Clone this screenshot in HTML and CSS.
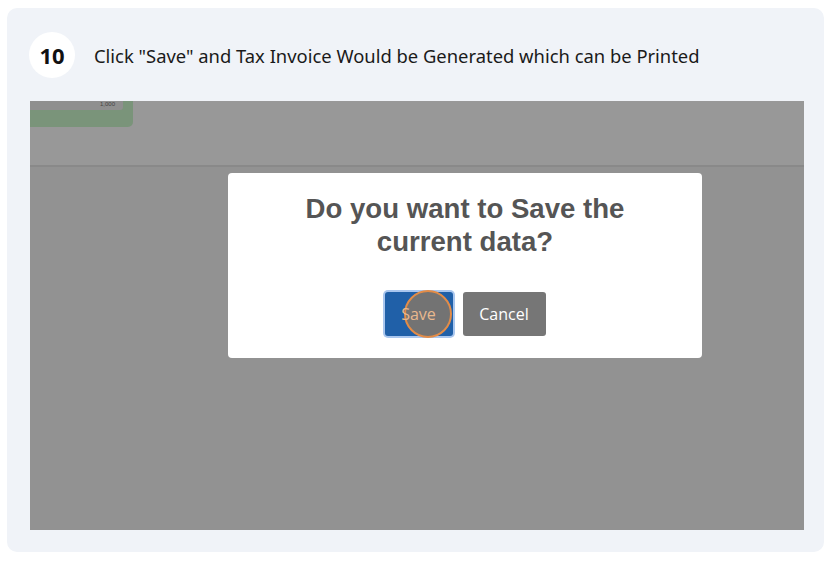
FILE: index.html
```html
<!DOCTYPE html>
<html>
<head>
<meta charset="utf-8">
<link rel="stylesheet" href="styles.css">
</head>
<body>
<div class="card">
  <div class="step">
    <div class="num">10</div>
    <div class="title">Click "Save" and Tax Invoice Would be Generated which can be Printed</div>
  </div>
  <div class="shot">
    <div class="top">
      <div class="greenbox"><div class="inner"><span class="cut">1,000</span></div></div>
    </div>
    <div class="bottom">
      <div class="dialog">
        <div class="q">Do you want to Save the<br>current data?</div>
        <div class="btns">
          <div class="btn save"><span class="ring"></span><span class="lbl">Save</span></div>
          <div class="btn cancel">Cancel</div>
        </div>
      </div>
    </div>
  </div>
</div>
</body>
</html>
```
FILE: styles.css
```css
html, body { margin: 0; padding: 0; background: #ffffff; }
body { width: 831px; height: 561px; font-family: "Noto Sans", "Open Sans", sans-serif; }
.card {
  margin: 8px 0 0 7px;
  width: 817px;
  height: 544px;
  background: #f0f3f8;
  border-radius: 10px;
  box-sizing: border-box;
  padding: 0 20px 0 23px;
  display: flex;
  flex-direction: column;
}
.step { display: flex; align-items: center; height: 93px; }
.num {
  width: 46px; height: 46px; border-radius: 50%;
  background: #fff; margin-left: -1px;
  display: flex; align-items: center; justify-content: center;
  font-weight: 700; font-size: 22px; color: #111;
}
.title { margin-left: 19px; font-size: 18.4px; color: #1a1a1a; margin-top: 2px; }
.shot { width: 774px; height: 429px; display: flex; flex-direction: column; background: #929292; }
.top { height: 64px; background: #989898; border-bottom: 2px solid #898989; }
.greenbox {
  width: 103px; height: 26px; background: #7a947a; border-radius: 0 0 5px 0;
}
.inner {
  width: 93px; height: 9px; background: #8f8f8f; border-radius: 0 0 3px 0;
  display: flex; justify-content: flex-end; align-items: flex-start; padding-right: 8px; box-sizing: border-box;
}
.cut { font-size: 6px; line-height: 7px; color: #444; font-family: "Liberation Sans", sans-serif; }
.bottom { flex: 1; position: relative; }
.dialog {
  position: absolute; left: 198px; top: 6px;
  width: 474px; height: 185px; background: #fff; border-radius: 4px;
  display: flex; flex-direction: column; align-items: center;
}
.q {
  margin-top: 19px; text-align: center;
  font-family: "Liberation Sans", Arial, sans-serif; font-weight: 700; font-size: 27.6px;
  line-height: 33px; color: #555;
}
.btns { display: flex; gap: 10px; margin-top: 34px; align-items: center; }
.btn {
  height: 44px; border-radius: 3px; color: #fff;
  font-family: "Open Sans", "Noto Sans", sans-serif; font-size: 16px;
  display: flex; align-items: center; justify-content: center; position: relative;
}
.save { width: 68px; height: 44px; background: #2060a8; box-shadow: 0 0 0 2px #a9c6ee; }
.lbl { position: relative; color: #e8b88e; }
.cancel { width: 83px; background: #767676; }
.ring {
  position: absolute; left: 19px; top: -2px; width: 48px; height: 48px; border-radius: 50%;
  border: 2px solid #e38c47; background: #737373; box-sizing: border-box;
}
```
